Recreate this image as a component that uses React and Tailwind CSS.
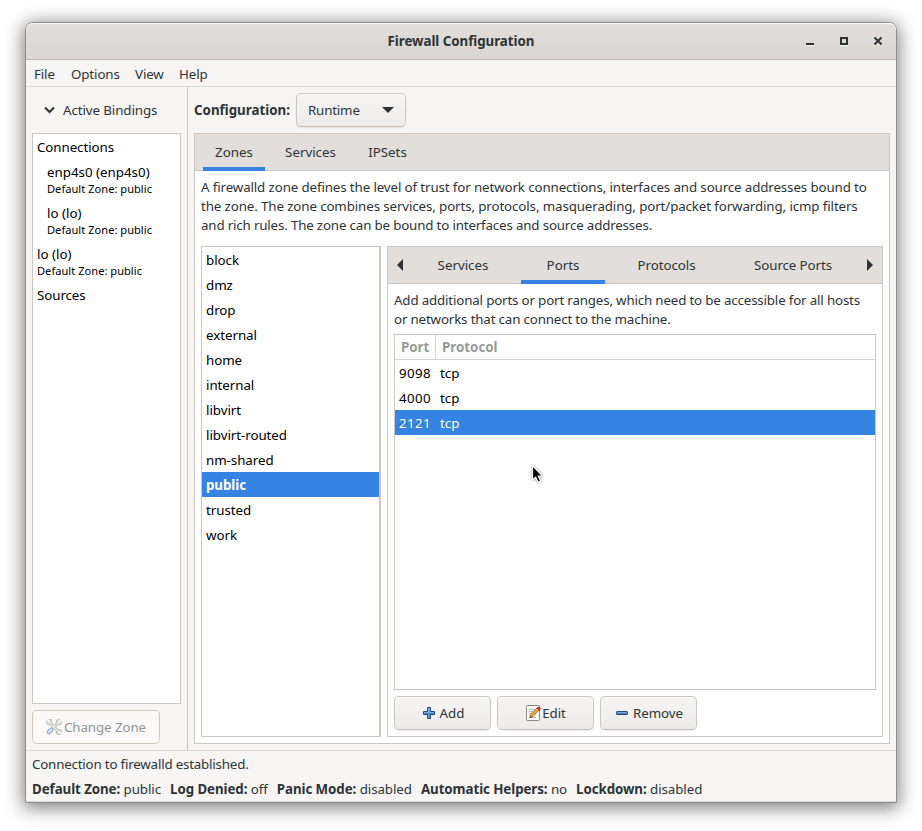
const ZONES = ['block', 'dmz', 'drop', 'external', 'home', 'internal', 'libvirt', 'libvirt-routed', 'nm-shared', 'public', 'trusted', 'work'];
const PORTS = [['9098', 'tcp'], ['4000', 'tcp'], ['2121', 'tcp']];
const STATUS = [
  ['Default Zone:', 'public'],
  ['Log Denied:', 'off'],
  ['Panic Mode:', 'disabled'],
  ['Automatic Helpers:', 'no'],
  ['Lockdown:', 'disabled'],
];

function TitleBar() {
  return (
    <div className="flex h-[37px] shrink-0 items-center rounded-t-[7px] border-b border-[#bfb8b1] bg-linear-to-b from-[#e1dedb] to-[#dad6d2] shadow-[inset_0_1px_#f9f8f8]">
      <div className="w-[110px]" />
      <h1 className="flex-1 text-center font-bold tracking-[-0.04px]">Firewall Configuration</h1>
      <svg className="w-[110px] shrink-0" height="36" viewBox="4 0 110 36" fill="none" shapeRendering="crispEdges">
        <rect x="24" y="22" width="8" height="1" fill="#f5f3f2" />
        <rect x="24" y="20" width="8" height="2" fill="#2e3436" />
        <path d="M58 22.5h8" stroke="#f5f3f2" />
        <rect x="59" y="15" width="6" height="6" stroke="#2e3436" strokeWidth="2" />
        <path d="M92.5 15.3l7 7M99.500 15.300l-7 7" stroke="#f5f3f2" strokeWidth="2" shapeRendering="auto" />
        <path d="M92.500 14.500l7 7M99.500 14.500l-7 7" stroke="#2e3436" strokeWidth="2.100" shapeRendering="auto" />
      </svg>
    </div>
  );
}

function BindingRow({ name, indent }) {
  return (
    <div className={indent ? 'h-[41px] pt-1 pl-[14px]' : 'h-[41px] pt-1 pl-1'}>
      <div className="leading-[18px]">{name}</div>
      <div className="text-[11.100px] leading-[15px] tracking-[0.02px]">Default Zone: public</div>
    </div>
  );
}

function Sidebar() {
  return (
    <aside className="flex w-[162px] shrink-0 flex-col border-r border-[#cdc7c2] pr-1.5 pb-1.5 pl-1.5">
      <div className="flex h-[46px] items-center pl-3">
        <svg width="11" height="8" viewBox="0 0 11 8" fill="none" stroke="#2e3436" strokeWidth="2">
          <path d="M1 1.500l4.500 4.500L10 1.500" />
        </svg>
        <span className="ml-2 tracking-[-0.09px]">Active Bindings</span>
      </div>
      <div className="mb-1.5 flex-1 border border-[#cdc7c2] bg-white text-black">
        <div className="h-[25px] pl-1 leading-[26px] tracking-[-0.08px]">Connections</div>
        <BindingRow name="enp4s0 (enp4s0)" indent />
        <BindingRow name="lo (lo)" indent />
        <BindingRow name="lo (lo)" />
        <div className="h-[25px] pl-1 leading-[26px] tracking-[-0.08px]">Sources</div>
      </div>
      <button className="flex h-[34px] w-[128px] items-center justify-center gap-0.5 rounded-[5px] border border-[#cdc7c2] bg-[#faf9f8] tracking-[-0.08px] text-[#929595]">
        <ToolsIcon />
        Change Zone
      </button>
    </aside>
  );
}

function ToolsIcon() {
  return (
    <svg width="16" height="16" viewBox="0 0 16 16" fill="none" strokeLinecap="round">
      <path d="M4.500 4.500l7 7M11.500 4.500L7 9" stroke="#b4b4b3" strokeWidth="3" />
      <circle cx="3.300" cy="3" r="2" stroke="#b4b4b3" strokeWidth="2.400" />
      <circle cx="13" cy="13" r="1.800" stroke="#b4b4b3" strokeWidth="2.400" />
      <circle cx="12.800" cy="3.200" r="1.800" stroke="#b4b4b3" strokeWidth="2.400" />
      <path d="M4.500 4.500l7 7M11.500 4.500L7 9" stroke="#eeeeed" strokeWidth="1.200" />
      <circle cx="3.300" cy="3" r="2" stroke="#eeeeed" strokeWidth=".8" />
      <circle cx="13" cy="13" r="1.800" stroke="#eeeeed" strokeWidth=".8" />
      <circle cx="12.800" cy="3.200" r="1.800" stroke="#eeeeed" strokeWidth=".8" />
      <path d="M1.800 .5l1.500 2.500M13 13l2.500 1M12.800 3.200L15 .8" stroke="#faf9f8" strokeWidth="1.800" />
      <path d="M5 11l-2 2" stroke="#8fb0da" strokeWidth="4.600" />
      <path d="M5 11l-2 2" stroke="#d2e0f2" strokeWidth="2.600" />
    </svg>
  );
}

function PlusIcon() {
  return (
    <svg width="16" height="16" viewBox="0 0 16 16">
      <path d="M6.500 2.500h3v4h4v3h-4v4h-3v-4h-4v-3h4z" fill="#7fa6d6" stroke="#204a87" strokeLinejoin="round" />
      <path d="M3 8.500h10M8.500 8.500V13" stroke="#4f80bd" />
    </svg>
  );
}

function MinusIcon() {
  return (
    <svg width="16" height="16" viewBox="0 0 16 16">
      <rect x="2.500" y="6.500" width="11" height="3" rx=".6" fill="#7fa6d6" stroke="#204a87" />
      <path d="M3 8.500h10" stroke="#4f80bd" />
    </svg>
  );
}

function EditIcon() {
  return (
    <svg width="16" height="16" viewBox="0 0 16 16" fill="none">
      <rect x="1.500" y=".5" width="13" height="15" rx=".8" fill="#fafafa" stroke="#8a8c88" />
      <path d="M4 4.500h6M4 6.500h6M4 8.500h4M4 10.500h2M4 12.500h7" stroke="#b8b8b6" />
      <path d="M5 12.500l1-3 6-6.500 2 2-6 6.500z" fill="#f5a83b" stroke="#9b5a10" strokeWidth=".8" />
      <path d="M12 3l1-.8c1-.8 2.800.7 2.300 1.800l-1 1z" fill="#e33030" stroke="#c01818" strokeWidth=".7" />
      <path d="M4.500 13l.6-1.800 1.200 1.200z" fill="#222" />
    </svg>
  );
}

function ActionButton({ icon, label, className }) {
  return (
    <button className={`flex h-[34px] w-[97px] items-center justify-center rounded-[5px] border border-[#cdc7c2] border-b-[#c4bdb6] bg-linear-to-b from-[#f6f5f4] to-[#edebe9] shadow-[inset_0_1px_#fbfafa,0_1px_2px_rgba(0,0,0,0.07)] ${className}`}>
      {icon}
      {label}
    </button>
  );
}

function Tab({ label, active, className }) {
  return (
    <div className={`flex h-[37px] items-center justify-center pb-px ${active ? 'shadow-[inset_0_-4px_#3584e4]' : ''} ${className}`}>
      {label}
    </div>
  );
}

function PortsPanel() {
  return (
    <section className="flex w-[496px] flex-col border border-[#cdc7c2]">
      <div className="flex h-[37px] shrink-0 items-center border-b border-[#cdc7c2] bg-[#e1dedb]">
        <svg className="ml-[9px]" width="6" height="12" viewBox="0 0 6 12">
          <path d="M6 0v12L0 6z" fill="#2e3436" />
        </svg>
        <Tab label="Services" className="ml-[18px] w-[84px]" />
        <Tab label="Ports" active className="ml-4 w-[84px]" />
        <Tab label="Protocols" className="ml-5 w-[83px] tracking-[-0.05px]" />
        <Tab label="Source Ports" className="ml-[30px] w-[110px] tracking-[-0.1px]" />
        <svg className="ml-[19px]" width="6" height="12" viewBox="0 0 6 12">
          <path d="M0 0v12l6-6z" fill="#2e3436" />
        </svg>
      </div>
      <div className="flex flex-1 flex-col p-1.5">
        <p className="h-11 leading-[19px] tracking-[-0.165px] whitespace-nowrap">
          <span className="block pt-px">Add additional ports or port ranges, which need to be accessible for all hosts</span>
          <span className="block">or networks that can connect to the machine.</span>
        </p>
        <div className="mb-1.5 flex-1 border border-[#cdc7c2] text-black">
          <div className="flex h-[25px] border-b border-[#d5d2cf] font-bold leading-6 text-[#969a9a]">
            <div className="w-[41px] border-r border-[#d5d2cf] pl-1.5">Port</div>
            <div className="pl-1.5">Protocol</div>
          </div>
          {PORTS.map(([port, protocol]) => (
            <div key={port} className={`flex h-[25px] leading-[26px] ${port === '2121' ? 'bg-[#3584e4] text-white' : ''}`}>
              <div className="w-[41px] pl-1 tracking-[0.38px]">{port}</div>
              <div className="pl-1">{protocol}</div>
            </div>
          ))}
        </div>
        <div className="flex gap-1.5">
          <ActionButton icon={<PlusIcon />} label="Add" className="gap-[3px]" />
          <ActionButton icon={<EditIcon />} label="Edit" className="gap-px tracking-[-0.1px]" />
          <ActionButton icon={<MinusIcon />} label="Remove" className="gap-[3px] tracking-[-0.1px]" />
        </div>
      </div>
    </section>
  );
}

function Main() {
  return (
    <main className="flex flex-1 flex-col px-1.5 pt-1.5 pb-1.5">
      <div className="mb-1.5 flex h-[34px] items-center">
        <span className="w-[102px] font-bold">Configuration:</span>
        <button className="flex h-[34px] w-[110px] items-center justify-between rounded-[5px] border border-[#cdc7c2] border-b-[#c4bdb6] bg-linear-to-b from-[#f6f5f4] to-[#edebe9] pr-[11px] pl-[11px] tracking-[-0.18px] shadow-[inset_0_1px_#fbfafa,0_1px_2px_rgba(0,0,0,0.07)]">
          Runtime
          <svg width="12" height="6" viewBox="0 0 12 6">
            <path d="M0 0h12L6 6z" fill="#2e3436" />
          </svg>
        </button>
      </div>
      <div className="flex flex-1 flex-col border border-[#cdc7c2] bg-white">
        <div className="flex h-[37px] shrink-0 items-center border-b border-[#cdc7c2] bg-[#e1dedb]">
          <Tab label="Zones" active className="ml-2 w-[62px]" />
          <Tab label="Services" className="ml-2 w-[75px]" />
          <Tab label="IPSets" className="ml-2 w-[63px]" />
        </div>
        <div className="flex flex-1 flex-col p-1.5">
          <p className="h-[69px] pt-px leading-[19px] whitespace-nowrap">
            <span className="block tracking-[-0.12px]">A firewalld zone defines the level of trust for network connections, interfaces and source addresses bound to</span>
            <span className="block tracking-[-0.115px]">the zone. The zone combines services, ports, protocols, masquerading, port/packet forwarding, icmp filters</span>
            <span className="block tracking-[-0.165px]">and rich rules. The zone can be bound to interfaces and source addresses.</span>
          </p>
          <div className="flex flex-1 gap-1.5">
            <div className="w-[180px] border border-r-2 border-[#cdc7c2] text-black">
              {ZONES.map((zone) => (
                <div key={zone} className={`h-[25px] pl-1 leading-[26px] tracking-[-0.05px] ${zone === 'public' ? 'bg-[#3584e4] font-bold text-white' : ''}`}>
                  {zone}
                </div>
              ))}
            </div>
            <PortsPanel />
          </div>
        </div>
      </div>
    </main>
  );
}

function Pointer() {
  return (
    <svg className="absolute top-[463px] left-[529px]" width="15" height="22" viewBox="0 0 15 22">
      <path d="M3.500 2.500v14.500l3.200-2.800 2.200 5 2.700-1.200-2.200-4.800h4.300z" fill="#000" stroke="#fff" strokeWidth="1.200" className="drop-shadow-[0_0_1px_rgba(0,0,0,0.5)]" />
    </svg>
  );
}

export default function App() {
  return (
    <div className="relative h-[831px] w-[922px] overflow-hidden bg-white pt-[22px] pl-[25px] font-['Noto_Sans',sans-serif] text-[13.333px] leading-[18px] text-[#2e3436]">
      <div className="flex h-[781px] w-[872px] flex-col rounded-t-lg border border-[#8f8f8f] bg-[#f6f5f4] shadow-[0_3px_18px_2px_rgba(0,0,0,0.5)]">
        <TitleBar />
        <nav className="flex h-[27px] shrink-0 items-center border-b border-[#dddbd8] px-2 pt-0.5 tracking-[-0.12px]">
          <span className="w-[37px]">File</span>
          <span className="w-16">Options</span>
          <span className="w-11">View</span>
          <span>Help</span>
        </nav>
        <div className="flex flex-1">
          <Sidebar />
          <Main />
        </div>
        <footer className="h-[52px] shrink-0 border-t border-[#dddbd8] px-1.5 shadow-[inset_0_-1px_#dddbd8]">
          <div className="h-[25px] leading-[26px] tracking-[-0.19px]">Connection to firewalld established.</div>
          <div className="flex gap-[9px] leading-[26px] tracking-[-0.075px]">
            {STATUS.map(([name, value]) => (
              <span key={name}><b>{name}</b> {value}</span>
            ))}
          </div>
        </footer>
      </div>
      <Pointer />
    </div>
  );
}
